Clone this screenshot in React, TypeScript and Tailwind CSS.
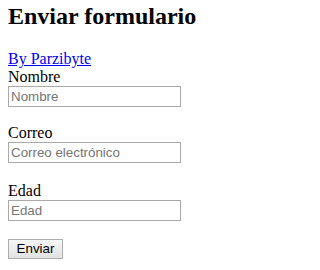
import { useState } from "react";

// ─── CAMPO ────────────────────────────────────────────────────────────────────
function Field({ label, placeholder, type, value, onChange, className = "" }: {
  label:       string;
  placeholder: string;
  type:        string;
  value:       string;
  onChange:    (v: string) => void;
  className?:  string;
}) {
  return (
    <label className={`flex flex-col items-start ${className}`}>
      <span className="h-[18px] leading-[18px] text-[16px]">{label}</span>
      <input
        type={type}
        value={value}
        placeholder={placeholder}
        onChange={(e) => onChange(e.target.value)}
        className="w-[173px] h-[21px] px-[2px] border border-[#a9a9a9] bg-white text-black font-['Liberation_Sans',Arial,sans-serif] text-[13.33px] outline-none placeholder:text-[#757575]"
      />
    </label>
  );
}

// ─── FORMULARIO ───────────────────────────────────────────────────────────────
export default function App() {
  const [nombre, setNombre] = useState("");
  const [correo, setCorreo] = useState("");
  const [edad, setEdad]     = useState("");

  return (
    <div className="px-2 bg-white text-black font-['Liberation_Serif','Times_New_Roman',serif]">
      <h1 className="pt-[2px] text-[24px] leading-[28px] font-bold whitespace-nowrap">Enviar formulario</h1>

      <a href="#" className="block mt-5 w-fit h-[18px] leading-[18px] text-[16px] text-[#0000ee] underline">
        By Parzibyte
      </a>

      <form className="flex flex-col items-start" onSubmit={(e) => e.preventDefault()}>
        <Field label="Nombre" placeholder="Nombre" type="text" value={nombre} onChange={setNombre} />
        <Field label="Correo" placeholder="Correo electrónico" type="email" value={correo} onChange={setCorreo} className="mt-[17px]" />
        <Field label="Edad" placeholder="Edad" type="text" value={edad} onChange={setEdad} className="mt-[19px]" />

        <button
          type="submit"
          className="mt-[18px] w-[55px] h-[20px] border border-[#adadad] bg-gradient-to-b from-[#f6f6f6] to-[#e2e2e2] text-black font-['Liberation_Sans',Arial,sans-serif] text-[13.33px] leading-none"
        >
          Enviar
        </button>
      </form>
    </div>
  );
}
